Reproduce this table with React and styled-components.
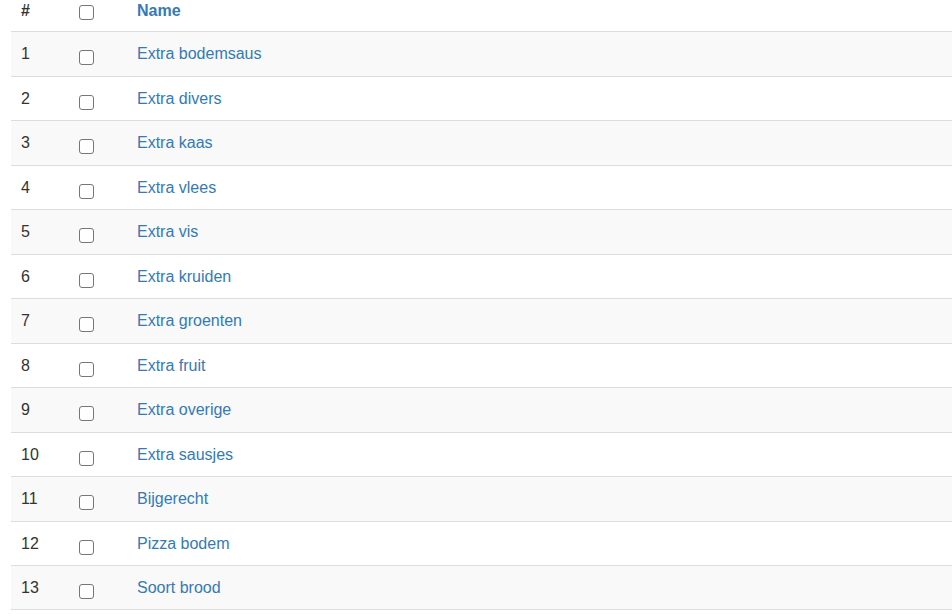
import styled, { createGlobalStyle } from "styled-components"

const items = [
    "Extra bodemsaus",
    "Extra divers",
    "Extra kaas",
    "Extra vlees",
    "Extra vis",
    "Extra kruiden",
    "Extra groenten",
    "Extra fruit",
    "Extra overige",
    "Extra sausjes",
    "Bijgerecht",
    "Pizza bodem",
    "Soort brood",
];

const App = () => {
    return (
        <>
            <GlobalStyle />
            <Page>
                <Table>
                    <HeadRow>
                        <HeadCell>#</HeadCell>
                        <HeadCell><Check type="checkbox" $head /></HeadCell>
                        <HeadCell><SortLink href="#">Name</SortLink></HeadCell>
                    </HeadRow>
                    {items.map((name, i) => (
                        <Row key={name} $odd={i % 2 === 0}>
                            <Cell>{i + 1}</Cell>
                            <Cell><Check type="checkbox" /></Cell>
                            <Cell><NameLink href="#">{name}</NameLink></Cell>
                        </Row>
                    ))}
                </Table>
            </Page>
        </>
    );
};
export default App;

const GlobalStyle = createGlobalStyle`
    body {
        margin: 0;
        background: #ffffff;
        font-family: "Liberation Sans", Arial, sans-serif;
        font-size: 16px;
        color: #333333;
    }
`

const Page = styled.div`
    padding-left: 11px;
    overflow: hidden;
`

const Table = styled.div`
    width: 100%;
    min-width: 941px;
`

const HeadRow = styled.div`
    display: grid;
    grid-template-columns: 58px 58px 1fr;
    height: 31px;
    box-sizing: border-box;
`

const HeadCell = styled.div`
    padding: 1px 0 0 10px;
    line-height: 20px;
    font-weight: bold;
    color: #333333;
`

const Row = styled.div`
    display: grid;
    grid-template-columns: 58px 58px 1fr;
    height: 44.5px;
    box-sizing: border-box;
    border-top: 1px solid #dddddd;
    background-color: ${p => p.$odd ? "#f9f9f9" : "#ffffff"};

    &:last-child {
        border-bottom: 1px solid #dddddd;
    }
`

const Cell = styled.div`
    padding: 12px 0 0 10px;
    line-height: 20px;
`

const Check = styled.input`
    appearance: none;
    display: block;
    width: 15px;
    height: 15px;
    margin: ${p => p.$head ? "4px" : "6px"} 0 0 0;
    box-sizing: border-box;
    border: 1px solid #767676;
    border-radius: 3px;
    background: #ffffff;
`

const SortLink = styled.a`
    color: #337ab7;
    text-decoration: none;
`

const NameLink = styled.a`
    color: #337ab7;
    font-weight: normal;
    text-decoration: none;
`
